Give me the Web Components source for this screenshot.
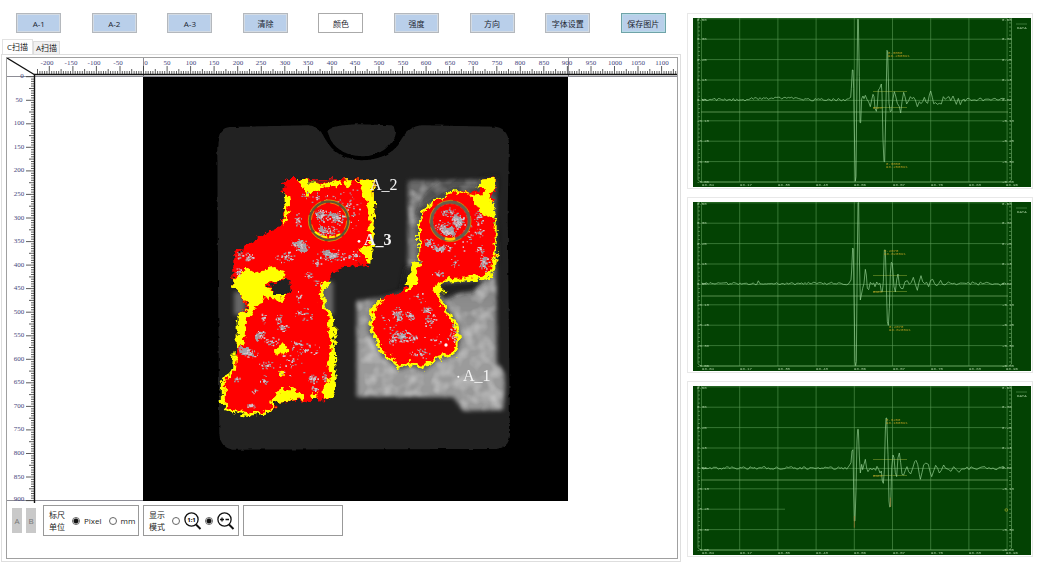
<!DOCTYPE html>
<html lang="zh-CN">
<head>
<meta charset="utf-8">
<title>C扫描</title>
<style>
body { margin: 0; background: #fff; color: #222; font: 8px/11px "Open Sans", "Noto Sans CJK SC", sans-serif; }
</style>
</head>
<body>
<scan-app></scan-app>
<script>
// Small deterministic generator, so that textures are the same on every load.
function seeded(s) {
  return () => ((s = (s * 1664525 + 1013904223) >>> 0) / 4294967296);
}
function define(name, html, setup) {
  const t = document.createElement('template');
  t.innerHTML = html;
  customElements.define(name, class extends HTMLElement {
    constructor() {
      super();
      this.attachShadow({ mode: 'open' }).append(t.content.cloneNode(true));
    }
    connectedCallback() { if (setup) setup(this, this.shadowRoot); }
  });
}

define('tool-button', `
<style>
:host { display: block; width: 45px; }
button { box-sizing: border-box; width: 100%; height: 20px; padding: 0; border: 1px solid #b4b8bd; box-shadow: inset 0 0 0 1px #d3dbe4; background: #b9cfea; color: #1c2530; font: inherit; white-space: nowrap; }
:host([kind=plain]) button { background: #fff; border-color: #aaa; box-shadow: none; }
:host([kind=focus]) button { border-color: #6fa3a8; box-shadow: inset 0 0 0 1px #b8dbe8; }
</style>
<button type="button"><slot></slot></button>`);

define('tool-bar', `
<style>
:host { display: grid; grid-template-columns: repeat(9, minmax(0, 1fr)); justify-items: center; padding: 13px 0 6px; }
</style>
<slot></slot>`);

define('tab-strip', `
<style>
:host { display: flex; align-items: flex-end; height: 15px; padding-left: 1px; }
button { box-sizing: border-box; height: 13px; padding: 0 2px 1px; border: 1px solid #ddd; border-bottom: 0; background: #f1f1f1; color: #222; font: inherit; white-space: nowrap; }
button[aria-selected=true] { height: 15px; padding: 0 4px 2px; background: #fff; border-color: #e2e2e2; }
</style>
<button type="button" role="tab" aria-selected="true">C扫描</button>
<button type="button" role="tab" aria-selected="false">A扫描</button>`);

define('scan-view', `
<style>
:host { display: block; }
svg { display: block; width: 100%; height: auto; }
.num { font: 7px "Liberation Serif", serif; fill: #45457c; text-anchor: middle; }
.mark { font: 16px "Liberation Serif", serif; fill: #f4f4f4; }
.strong { font-weight: bold; }
</style>
<svg viewBox="7 58 670 445" role="img" aria-label="C扫描">
  <defs>
    <filter id="rough" x="-5%" y="-5%" width="110%" height="110%">
      <feTurbulence type="fractalNoise" baseFrequency=".06" numOctaves="3" seed="4"/>
      <feDisplacementMap in="SourceGraphic" scale="30" xChannelSelector="R" yChannelSelector="G"/>
    </filter>
    <filter id="edge" x="-5%" y="-5%" width="110%" height="110%">
      <feTurbulence type="fractalNoise" baseFrequency=".04" numOctaves="2" seed="9"/>
      <feDisplacementMap in="SourceGraphic" scale="9" xChannelSelector="R" yChannelSelector="G"/>
    </filter>
    <filter id="soft" x="-20%" y="-20%" width="140%" height="140%"><feGaussianBlur stdDeviation="7"/></filter>
    <filter id="cloud" x="-5%" y="-5%" width="110%" height="110%">
      <feGaussianBlur in="SourceGraphic" stdDeviation="7" result="b"/>
      <feTurbulence type="fractalNoise" baseFrequency=".025" numOctaves="2" seed="12"/>
      <feColorMatrix values="0 0 0 0 1  0 0 0 0 1  0 0 0 0 1  2 0 0 0 -.8" result="n"/>
      <feComposite in="n" in2="b" operator="in" result="m"/>
      <feComponentTransfer in="m" result="k"><feFuncA type="linear" slope=".3"/></feComponentTransfer>
      <feMerge><feMergeNode in="b"/><feMergeNode in="k"/></feMerge>
    </filter>
    <linearGradient id="metal" x1="0" y1="0" x2="0" y2="1">
      <stop offset="0" stop-color="#686868"/><stop offset=".45" stop-color="#858585"/><stop offset=".75" stop-color="#9c9c9c"/><stop offset="1" stop-color="#989898"/>
    </linearGradient>
    <clipPath id="redClip"><use href="#partL"/><use href="#partR"/></clipPath>
    <path id="partL" d="M432 216L445 207L700 208L704 340L692 464L610 472L580 492L566 520L545 534L552 590L578 620L581 750L587 840L570 867L410 875L395 905L330 917L265 905L250 880L248 820L280 778L290 710L292 620L320 590L300 550L280 535L280 435L310 410L420 347L437 290Z"/>
    <path id="partR" d="M950 240L890 268L850 300L836 350L842 450L818 480L812 515L800 525L780 550L730 565L700 595L693 660L730 730L780 772L810 760L850 775L890 745L945 730L955 680L945 640L900 570L885 540L915 512L1045 500L1068 450L1067 350L1050 290L1067 235L1067 205L1030 208L1015 245Z"/>
  </defs>
  <g fill="none" stroke="#8d8d96"><path d="M7 76.5H677M7 500.5H144M143.5 58V77M568.5 58V77"/></g>
  <g id="ticks" stroke="#333" fill="none"></g>
  <path d="M7 58L35 75" stroke="#111" stroke-width="1.3"/>
  <path d="M34 74.5H677" stroke="#111" stroke-width="1.3"/><path d="M34.5 74V503" stroke="#111" stroke-width="1.4"/>
  <g id="nums"></g>
  <rect x="143" y="77" width="425" height="424" fill="#000"/>
  <g transform="translate(140 110) scale(.33333)">
    <path filter="url(#edge)" fill="#232323" d="M232 110Q233 54 270 51L505 46Q530 48 545 68L556 88Q590 148 665 151Q740 148 775 105Q802 46 850 46L1068 50Q1104 56 1107 100L1103 300L1107 700L1110 975Q1107 1012 1070 1017L280 1019Q240 1014 238 970L234 500Z"/>
    <path filter="url(#edge)" fill="#232323" d="M562 64Q575 45 655 43L755 46Q774 54 765 80Q735 138 665 139Q600 136 572 90Z"/>
    <g filter="url(#soft)" fill="#666"><rect x="282" y="545" width="35" height="70"/><rect x="545" y="515" width="35" height="100"/></g>
    <path filter="url(#cloud)" fill="url(#metal)" d="M804 212L1067 210L1070 760Q1096 780 1095 820L1090 900L970 902L940 862L650 860L650 572L740 562L804 540Z"/>
    <g filter="url(#soft)" fill="#222"><path d="M905 520L1030 510L1000 545L950 552L915 570L890 540Z"/><path d="M795 470H835L820 545H780Z" opacity=".8"/><path d="M900 215H1020L1005 235L940 230L850 280L835 330H825Q830 260 900 215Z" opacity=".35"/></g>
    <use href="#partR" filter="url(#soft)" fill="none" stroke="#222" stroke-width="14" opacity=".65"/>
    <g filter="url(#rough)">
      <use href="#partL" fill="#f00"/><use href="#partR" fill="#f00"/>
      <g fill="#ff0">
        <path d="M470 208L500 255L535 235L600 228L602 210L575 215L545 225L515 212Z"/>
        <path d="M614 208H634V227H614ZM648 210L700 208L704 340L694 464L682 462L680 434L655 418L690 402L688 300L668 250Z"/>
        <path d="M432 250L458 262L446 290L438 336L426 342L437 292Z"/>
        <path d="M280 510L320 475L345 488L400 474L438 485L432 505L385 518L380 530L395 548L445 556L430 570L370 565L345 600L318 640L310 710L290 715L290 620L325 590L300 550L280 535Z"/>
        <path d="M575 515L548 516L538 560L552 600L566 620L562 660L576 690L562 770L576 800L548 840L548 860L572 868L588 840L582 620L556 588L552 540Z"/>
        <path d="M400 856L430 835L460 835L492 856L488 868L410 876L396 888Z"/><path d="M512 850H532V867H518Z"/>
        <circle cx="425" cy="717" r="17"/><circle cx="425" cy="790" r="11"/>
        <path d="M1030 208L1067 207L1066 235L1046 250L1068 310L1060 330L1030 318L1000 270L985 248L1020 258L1035 240L1012 232Z"/>
        <path d="M818 455H842L828 488L832 515L805 545L800 520Z"/><path d="M878 527L912 512L905 535L925 550H890Z"/>
      </g>
      <g fill="none" stroke="#ff0">
        <path stroke-width="9" d="M285 730L280 778L250 818L250 880L265 902L330 915L390 903L400 878"/>
        <path stroke-width="6" d="M985 248L940 243L890 268L850 300L837 350L838 450"/>
        <path stroke-width="10" d="M730 567L700 595L695 660L730 730L780 770L810 758L850 773L890 745L945 728L955 680L945 640L900 570L885 535"/>
        <path stroke-width="13" d="M915 512L970 508L1045 498L1058 468L1066 450"/><path stroke-width="6" d="M1067 330V450"/>
        <circle cx="737" cy="735" r="6"/>
      </g>
      <path fill="#242424" d="M385 528L415 508L448 513L452 545L430 558L400 552Z"/>
      <path fill="#333" opacity=".6" d="M495 209H590L570 218H510Z"/>
      <g fill="#a4a4aa">
        <path d="M295 715L325 714L346 740L335 745L300 732Z"/><path d="M343 685L360 665L370 668L350 690Z"/>
        <path d="M455 395L490 398L505 422L492 430L470 415Z"/><path d="M550 420L575 430L600 437L590 445L555 435Z"/>
        <path d="M530 308L550 306L552 325L532 330ZM575 305L597 325L585 332L566 318ZM537 352L557 350V370H540Z"/>
        <path d="M770 675L800 665L808 688L778 692ZM765 608L780 610L785 634L774 632Z"/>
        <path d="M945 315L960 318L968 345L948 350ZM905 348L940 350L945 375L910 370Z"/>
        <path d="M1025 440L1040 442L1034 475L1020 472ZM857 390H876V405H860ZM885 410H915V423H888Z"/>
      </g>
    </g>
    <g clip-path="url(#redClip)"><path id="grey" fill="#a4929a"/><path id="light" fill="#d8c4cc"/></g>
    <g fill="none">
      <circle cx="567" cy="332" r="58" stroke="#5e5634" stroke-width="8"/><circle cx="567" cy="332" r="62" stroke="#e8bc00" stroke-width="2" stroke-dasharray="46 9"/><circle cx="567" cy="332" r="53" stroke="#e8bc00" stroke-width="2" stroke-dasharray="28 14"/>
      <path d="M525 365Q560 395 600 372" stroke="#ff0" stroke-width="6" stroke-dasharray="18 5"/>
      <circle cx="931" cy="333" r="57" stroke="#66604e" stroke-width="10"/><circle cx="931" cy="333" r="62" stroke="#d8a800" stroke-width="2" stroke-dasharray="50 12"/><circle cx="931" cy="333" r="51" stroke="#d05028" stroke-width="2" stroke-dasharray="9 6"/>
      <path d="M915 385Q932 392 945 384" stroke="#fc0" stroke-width="8"/>
    </g>
    <g fill="#fff"><circle cx="657" cy="394" r="4"/><circle cx="955" cy="800" r="3"/><circle cx="918" cy="705" r="5"/></g>
  </g>
  <text class="mark" x="370" y="190">A_2</text><text class="mark strong" x="364" y="245">A_3</text><text class="mark" x="463" y="381">A_1</text>
</svg>`, (host, root) => {
  const k = 0.471, X = v => 143.5 + v * k, Y = v => 76.7 + v * k;
  let ticks = '', nums = '';
  const len = v => v % 50 === 0 ? 8 : v % 25 === 0 ? 5 : 3;
  for (let v = -225; v <= 1130; v += 5) ticks += `M${X(v).toFixed(1)} 74v-${len(v)}`;
  for (let v = 0; v <= 900; v += 5) ticks += `M34 ${Y(v).toFixed(1)}h-${len(v)}`;
  for (let v = -200; v <= 1100; v += 50) nums += `<text class="num" x="${Math.round(X(v)) + (v === 0 ? 2 : v < 0 ? -2 : 0)}" y="65">${v}</text>`;
  for (let v = 0; v <= 900; v += 50) nums += `<text class="num" x="${v ? 19 : 22}" y="${Math.floor(Y(v)) + (v === 900 ? 1 : 2)}">${v}</text>`;
  root.getElementById('ticks').innerHTML = `<path stroke-width=".8" d="${ticks}"/>`;
  root.getElementById('nums').innerHTML = nums;

  const rnd = seeded(77);
  // centre x, centre y, spread x, spread y, number of specks
  const clusters = [[545,315,22,20,60],[590,325,22,20,60],[560,362,34,16,60],[475,330,12,22,24],[480,405,28,22,50],[435,440,30,18,40],[580,435,50,20,80],[325,440,14,14,30],[298,435,12,12,20],[295,485,9,12,18],[505,495,12,12,18],[530,260,60,16,24],[625,290,40,70,46],[645,435,20,16,26],[530,455,14,14,20],
    [370,625,12,18,24],[415,625,10,20,30],[425,655,22,12,36],[360,675,18,16,30],[395,695,26,14,34],[470,700,22,12,16],[500,720,50,24,36],[330,730,24,14,40],[380,765,26,12,34],[520,805,18,14,46],[525,835,12,10,20],[553,800,10,16,16],[290,805,12,14,12],[370,810,12,16,16],[345,840,10,12,14],[333,888,14,8,26],[490,610,30,22,26],[480,560,20,18,14],[530,520,14,16,10],[450,750,60,50,34],
    [930,305,30,14,50],[950,335,24,24,70],[905,350,26,22,50],[925,368,24,12,40],[865,395,16,14,26],[900,415,34,14,50],[1015,325,14,24,30],[1018,365,14,14,24],[1020,415,18,12,22],[1033,455,14,30,46],[945,455,14,18,16],[890,490,20,10,26],[985,380,50,50,26],
    [770,610,16,22,36],[810,615,18,16,40],[860,600,16,12,36],[870,630,18,26,30],[785,680,34,16,80],[755,690,12,14,24],[820,685,14,12,24],[840,730,34,16,36],[940,670,12,30,34],[885,690,40,20,18],[750,650,40,50,20],[830,560,30,26,14]];
  let grey = '', light = '';
  for (const [cx, cy, rx, ry, n] of clusters) for (let i = 0; i < n; i++) {
    const a = rnd() * 6.283, r = rnd(), w = 2 + Math.round(rnd() * 4), h = 2 + Math.round(rnd() * 3);
    const d = `M${Math.round(cx + Math.cos(a) * r * rx)} ${Math.round(cy + Math.sin(a) * r * ry)}h${w}v${h}h-${w}z`;
    if (rnd() < .6) grey += d; else light += d;
  }
  root.getElementById('grey').setAttribute('d', grey);
  root.getElementById('light').setAttribute('d', light);
});

define('wave-chart', `
<style>
:host { display: block; padding: 4px 1px 1px 5px; border: 1px solid #e8e8e8; }
svg { display: block; width: 100%; height: auto; background: #034203; }
text { font: 4px "Liberation Mono", monospace; fill: #a8cfa0; }
.tag text { fill: #b39b20; }
</style>
<svg viewBox="0 0 338 169" role="img" aria-label="A扫描"></svg>`, (host, root) => {
  const kind = +host.getAttribute('channel');
  // Traces in units of a third of a pixel; "dy" is where each trace's origin lies.
  const charts = {
    1: { dy: -8, base: 269, seed: 5, lead: 495, tail: 840, top: [610, 131, '0.3000', '98.2500us'], low: [603, 465],
      pts: [[497,262],[499,235],[502,180],[504,180],[506,235],[509,420],[511,514],[513,500],[516,200],[518,28],[520,28],[523,200],[525,338],[527,338],[530,266],[534,258],[537,266],[541,256],[546,268],[551,276],[556,290],[560,270],[564,253],[567,260],[570,295],[574,304],[577,285],[580,240],[584,235],[589,222],[591,250],[594,390],[597,455],[599,455],[603,280],[606,121],[608,125],[612,280],[616,305],[620,302],[624,265],[628,245],[632,258],[637,280],[643,290],[647,309],[651,275],[656,247],[660,260],[665,282],[671,272],[676,260],[681,266],[686,262],[691,270],[697,290],[703,275],[708,281],[713,275],[718,262],[723,276],[728,280],[733,255],[737,243],[742,262],[746,281],[752,278],[757,283],[763,280],[769,282],[775,260],[781,268],[787,262],[792,260],[797,272],[804,258],[808,268],[814,283],[820,265],[826,284],[832,270],[838,268]] },
    2: { dy: -7, base: 266, seed: 14, lead: 495, tail: 790, top: [598, 171, '0.2070', '98.0200us'], low: [612, 398],
      pts: [[498,255],[500,225],[503,159],[505,162],[507,300],[510,500],[512,512],[514,500],[517,180],[519,23],[521,23],[523,180],[526,315],[529,300],[533,280],[537,265],[541,223],[544,240],[547,280],[551,284],[556,262],[561,268],[566,264],[570,275],[575,261],[580,268],[585,265],[589,290],[592,290],[595,260],[598,165],[601,165],[604,270],[607,380],[610,391],[613,340],[616,235],[619,202],[622,205],[627,275],[631,291],[635,255],[639,237],[643,270],[648,280],[654,281],[660,260],[667,257],[673,268],[679,262],[685,247],[691,268],[697,286],[702,262],[708,242],[713,260],[719,266],[725,262],[731,275],[737,256],[743,253],[749,266],[755,273],[761,266],[767,256],[773,268],[780,270]] },
    3: { dy: -5, base: 261, seed: 29, lead: 490, tail: 840, top: [604, 119, '0.3200', '98.1500us'], low: null,
      pts: [[494,252],[498,245],[501,210],[504,206],[506,330],[508,420],[510,420],[513,330],[516,180],[518,145],[520,145],[523,225],[526,276],[530,250],[533,266],[537,250],[541,235],[545,262],[549,272],[555,262],[561,266],[567,262],[572,268],[576,256],[581,265],[585,276],[589,270],[592,300],[595,307],[598,270],[601,150],[603,111],[605,111],[609,220],[612,360],[614,378],[617,376],[620,260],[624,222],[627,230],[631,275],[635,287],[639,230],[643,216],[647,245],[651,280],[656,282],[661,268],[666,257],[671,272],[677,279],[683,262],[689,242],[693,238],[698,250],[703,280],[706,295],[711,275],[716,252],[722,246],[730,250],[735,272],[740,287],[746,270],[752,253],[758,262],[763,276],[769,268],[776,252],[782,262],[790,265],[798,271],[806,257],[814,266],[822,274],[830,264]] }
  };
  const c = charts[kind], rnd = seeded(c.seed), pts = [];
  for (let x = 50; x < c.lead; x += 5) pts.push([x, c.base + (rnd() - .5) * 8 - (kind === 1 && x > 195 && x < 350 ? 4 : 0)]);
  if (kind === 2) pts[34][1] -= 9;
  pts.push(...c.pts);
  for (let x = c.tail; x < 966; x += 6) pts.push([x, c.base + (rnd() - .5) * 11]);
  const gx = i => (8.5 + i * 38.2).toFixed(1), gy = i => (.8 + i * 20.4).toFixed(1);
  const ys = ['0.50', '0.38', '0.25', '0.13', '0.00', '-0.13', '-0.25', '-0.38', '-0.50'];
  const xs = ['98.04', '98.17', '98.30', '98.43', '98.56', '98.57', '98.70', '98.83', '98.96'];
  let grid = '', text = '', small = '';
  for (let i = 0; i < 9; i++) {
    const faded = kind === 3 && i === 6, y = Math.max(Math.round(gy(i)) + 1, 3);
    grid += `M${gx(i)} 0V164M8 ${gy(i)}H${faded ? 92 : 314}`;
    if (!faded) text += `<text x="309" y="${y}">${ys[i]}</text>`;
    text += `<text x="4" y="${y}">${ys[i]}</text><text x="${Math.min(Math.round(gx(i)), 313)}" y="168">${xs[i]}</text>`;
  }
  for (let y = .8; y < 164; y += 4.08) small += `M5 ${y.toFixed(1)}h2M316 ${y.toFixed(1)}h2`;
  const tag = (x, y) => `<text x="${Math.round(x / 3) - 8}" y="${Math.round(y / 3) + c.dy}">${c.top[2]}</text><text x="${Math.round(x / 3) - 8}" y="${Math.round(y / 3) + c.dy + 3}">${c.top[3]}</text>`;
  root.querySelector('svg').innerHTML = `
    <g fill="none" stroke="#5b9a56" stroke-width=".6"><path d="${grid}"/></g>
    <g fill="none" stroke="#76b070" stroke-width=".6"><path d="M5 0V162L8 164H316L318.500 162V0"/><path d="${small}"/></g>
    <path d="M8 94H315" stroke="#7fb070" stroke-width=".7"/>
    <path d="M180 73.500H214M180 89.500H214" stroke="#6c8c28" stroke-width=".7"/>
    <g transform="translate(-8 ${c.dy}) scale(.33333)" fill="none" stroke-linejoin="round">
      <polyline stroke="#9cd598" stroke-width="2" points="${pts.map(p => p[0] + ',' + p[1].toFixed(1)).join(' ')}"/>
      ${kind === 3 ? '<path d="M508 405V440M616 350V378" stroke="#a87830" stroke-width="2"/><circle cx="964" cy="387" r="4" stroke="#789020" stroke-width="3"/>' : ''}
    </g>
    ${text}
    <g class="tag">${tag(c.top[0], c.top[1])}${c.low ? tag(c.low[0], c.low[1]) : ''}<text x="180" y="91">Gate</text></g>
    <path d="M323 6H334" stroke="#5c9c58" stroke-width=".6"/><text x="324" y="11">DATA</text>`;
});

define('option-box', `
<style>
:host { box-sizing: border-box; display: flex; align-items: center; width: 96px; height: 31px; border: 1px solid #999; }
:host([empty]) { width: 100px; }
</style>
<slot></slot>`);

define('unit-options', `
<style>
:host { display: flex; align-items: center; padding-left: 5px; gap: 7px; }
.cap { width: 16px; line-height: 12px; }
label { display: flex; align-items: center; gap: 4px; }
input { appearance: none; box-sizing: border-box; width: 8px; height: 8px; margin: 0; border: 1px solid #666; border-radius: 50%; background: #fff; }
input:checked { background: radial-gradient(circle, #111 0 2px, #fff 3px); }
</style>
<span class="cap">标尺单位</span>
<label><input type="radio" name="unit" checked>Pixel</label>
<label><input type="radio" name="unit">mm</label>`);

define('mode-options', `
<style>
:host { display: flex; align-items: center; padding-left: 5px; gap: 7px; }
.cap { width: 16px; line-height: 12px; }
label { display: flex; align-items: center; gap: 4px; }
label + label { margin-left: -4px; }
input { appearance: none; box-sizing: border-box; width: 8px; height: 8px; margin: 0; border: 1px solid #666; border-radius: 50%; background: #fff; }
input:checked { background: radial-gradient(circle, #111 0 2px, #fff 3px); }
svg { display: block; width: 18px; height: 18px; }
text { font: bold 6px "Open Sans", sans-serif; text-anchor: middle; }
</style>
<span class="cap">显示模式</span>
<label><input type="radio" name="mode" aria-label="1:1"><svg viewBox="0 0 18 18"><circle cx="7.500" cy="7.500" r="6.600" fill="none" stroke="#111" stroke-width="1.300"/><path d="M12 12.500L16.500 17" stroke="#111" stroke-width="2"/><text x="7.500" y="10">1:1</text></svg></label>
<label><input type="radio" name="mode" aria-label="适应" checked><svg viewBox="0 0 18 18"><circle cx="7.500" cy="7.500" r="6.600" fill="none" stroke="#111" stroke-width="1.300"/><path d="M12 12.500L16.500 17" stroke="#111" stroke-width="2"/><path d="M3 7.500H7M5 5.500V9.500M8.500 7.500H12" stroke="#111" stroke-width="1.300"/></svg></label>`);

define('scan-footer', `
<style>
:host { display: flex; align-items: center; gap: 7px; padding: 2px 5px 22px; }
.pair, .boxes { display: flex; gap: 4px; }
.pair button { width: 10px; height: 25px; padding: 0; border: 0; background: #c9c9c9; color: #777; font: inherit; }
</style>
<div class="pair"><button type="button">A</button><button type="button">B</button></div>
<div class="boxes">
  <option-box><unit-options></unit-options></option-box>
  <option-box><mode-options></mode-options></option-box>
  <option-box empty></option-box>
</div>`);

define('scan-panel', `
<style>
:host { display: block; padding: 2px 2px 2px 4px; border: 1px solid #dedede; }
.frame { border: 1px solid #a0a0a0; }
</style>
<div class="frame"><slot></slot></div>`);

define('scan-app', `
<style>
:host { display: grid; grid-template-columns: minmax(0, 680fr) minmax(0, 346fr); gap: 6px; padding: 0 7px 0 1px; align-items: start; }
aside { display: grid; gap: 8px; padding-top: 13px; }
</style>
<main>
  <tool-bar>
    <tool-button>A-1</tool-button><tool-button>A-2</tool-button><tool-button>A-3</tool-button>
    <tool-button>清除</tool-button><tool-button kind="plain">颜色</tool-button><tool-button>强度</tool-button>
    <tool-button>方向</tool-button><tool-button>字体设置</tool-button><tool-button kind="focus">保存图片</tool-button>
  </tool-bar>
  <tab-strip></tab-strip>
  <scan-panel><scan-view></scan-view><scan-footer></scan-footer></scan-panel>
</main>
<aside><wave-chart channel="1"></wave-chart><wave-chart channel="2"></wave-chart><wave-chart channel="3"></wave-chart></aside>`);
</script>
</body>
</html>
